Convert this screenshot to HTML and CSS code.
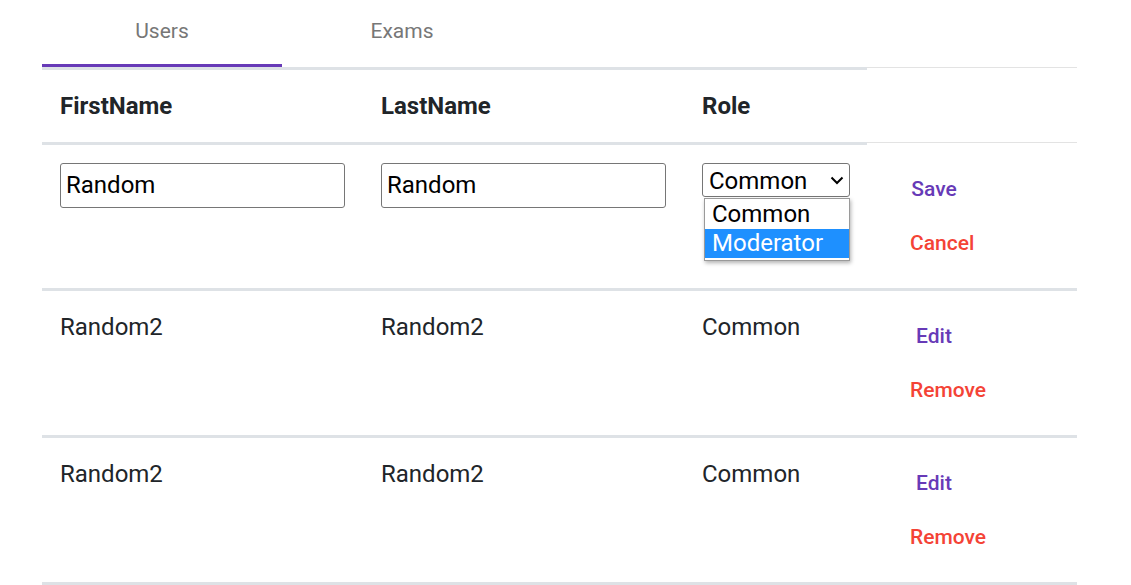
FILE: index.html
```html
<!DOCTYPE html>
<html>
<head>
<meta charset="utf-8">
<link rel="stylesheet" href="styles.css">
</head>
<body>
<div class="page">
  <div class="tabs">
    <div class="tab active">Users</div>
    <div class="tab">Exams</div>
  </div>
  <div class="grid">
    <div class="th">FirstName</div>
    <div class="th">LastName</div>
    <div class="th">Role</div>
    <div class="th th-empty"></div>

    <div class="td row1"><input class="field" type="text" value="Random"></div>
    <div class="td row1"><input class="field" type="text" value="Random"></div>
    <div class="td row1 role-cell">
      <div class="select-wrap">
        <select class="role-select">
          <option>Common</option>
          <option>Moderator</option>
        </select>
        <svg class="chev" width="14" height="9" viewBox="0 0 14 9"><path d="M1.5 1.5 L7 7 L12.5 1.5" fill="none" stroke="#000" stroke-width="2"/></svg>
      </div>
      <div class="dropdown">
        <div class="opt first">Common</div>
        <div class="opt selected">Moderator</div>
      </div>
    </div>
    <div class="td row1 actions">
      <button class="btn primary">Save</button>
      <button class="btn warn">Cancel</button>
    </div>

    <div class="td">Random2</div>
    <div class="td">Random2</div>
    <div class="td">Common</div>
    <div class="td actions">
      <button class="btn primary">Edit</button>
      <button class="btn warn">Remove</button>
    </div>

    <div class="td">Random2</div>
    <div class="td">Random2</div>
    <div class="td">Common</div>
    <div class="td actions">
      <button class="btn primary">Edit</button>
      <button class="btn warn">Remove</button>
    </div>
  </div>
</div>
</body>
</html>
```

FILE: styles.css
```css
* { box-sizing: border-box; }
html, body { margin: 0; padding: 0; background: #fff; }
body { font-family: Roboto, "Noto Sans", sans-serif; color: #212529; }
.page { padding-left: 42px; width: 1077px; }

.tabs { display: flex; height: 67px; }
.tab {
  width: 240px;
  display: flex;
  align-items: center;
  justify-content: center;
  padding-bottom: 2px;
  font-size: 21px;
  font-weight: 400;
  color: #777;
  border-bottom: 3px solid transparent;
}
.tab.active { border-bottom-color: #673ab7; }

.grid {
  display: grid;
  grid-template-columns: 321px 321px 183px 210px;
}
.th {
  font-size: 24px;
  font-weight: 700;
  line-height: 36px;
  padding: 18px 18px;
  border-top: 3px solid #dee2e6;
  border-bottom: 3px solid #dee2e6;
  height: 78px;
}
.th-empty {
  border-top: 1px solid #e3e3e3;
  border-bottom: 1px solid #e3e3e3;
  height: 76px;
}
.td {
  font-size: 24px;
  line-height: 36px;
  padding: 18px 18px;
  border-bottom: 3px solid #dee2e6;
  height: 147px;
}
.td.row1 { height: 146px; }

.field {
  display: block;
  width: 285px;
  height: 45px;
  margin: 0;
  padding: 0 5px 2px;
  font-family: Roboto, sans-serif;
  font-size: 24px;
  color: #000;
  border: 1px solid #767676;
  border-radius: 3px;
  background: #fff;
}

.role-cell { position: relative; }
.select-wrap { position: relative; width: 148px; }
.role-select {
  display: block;
  width: 148px;
  height: 34px;
  margin: 0;
  padding: 1px 6px 0;
  font-family: Roboto, sans-serif;
  font-size: 24px;
  color: #000;
  border: 1px solid #767676;
  border-radius: 3px;
  background: #fff;
  -webkit-appearance: none;
  appearance: none;
}
.chev {
  position: absolute;
  right: 6px;
  top: 13px;
  pointer-events: none;
}
.dropdown {
  position: absolute;
  left: 20px;
  top: 53px;
  width: 146px;
  background: #fff;
  border: 1px solid #9a9a9a;
  padding: 0 0 2px;
  box-shadow: 1px 2px 4px rgba(0,0,0,0.3);
}
.opt {
  font-size: 24px;
  line-height: 29px;
  height: 29px;
  padding-left: 7px;
  color: #000;
}
.opt.first { height: 30px; line-height: 30px; }
.opt.selected { background: #1e90ff; color: #fff; line-height: 28px; }

.actions {
  display: flex;
  flex-direction: column;
  align-items: flex-start;
  gap: 18px;
  padding: 27px 0 0 35px;
}
.td.row1.actions { padding-top: 26px; }
.btn {
  min-width: 64px;
  height: 36px;
  padding: 0 8px;
  margin: 0;
  border: none;
  background: transparent;
  font-family: Roboto, sans-serif;
  font-size: 21px;
  font-weight: 500;
  line-height: 36px;
  cursor: pointer;
}
.btn.primary { color: #673ab7; }
.btn.warn { color: #f44336; }
```
